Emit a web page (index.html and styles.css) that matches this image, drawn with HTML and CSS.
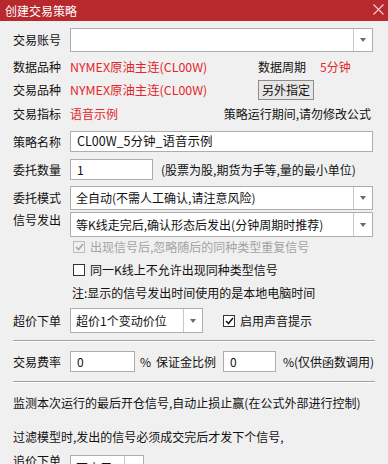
FILE: index.html
```html
<!DOCTYPE html>
<html lang="zh-CN">
<head>
    <meta charset="UTF-8">
    <meta name="viewport" content="width=device-width, initial-scale=1.0">
    <title>创建交易策略</title>
    <link rel="stylesheet" href="styles.css">
</head>

<body>
    <div class="window">
        <div class="titlebar">
            <span class="title">创建交易策略</span>
            <svg class="close" width="11" height="11" viewBox="0 0 11 11">
                <path d="M0.5 0.5 L10.5 10.5 M10.5 0.5 L0.5 10.5" stroke="#f3d0d1" stroke-width="1.1" fill="none"/>
            </svg>
        </div>

        <div class="content">
            <div class="row r1">
                <span class="label">交易账号</span>
                <div class="combo combo-full">
                    <span class="combo-text"></span>
                    <span class="combo-btn"><i class="arrow"></i></span>
                </div>
            </div>

            <div class="row r2">
                <span class="label">数据品种</span>
                <span class="value red">NYMEX原油主连(CL00W)</span>
                <span class="sub-label">数据周期</span>
                <span class="red">5分钟</span>
            </div>

            <div class="row r3">
                <span class="label">交易品种</span>
                <span class="value red">NYMEX原油主连(CL00W)</span>
                <button class="btn">另外指定</button>
            </div>

            <div class="row r4">
                <span class="label">交易指标</span>
                <span class="red">语音示例</span>
                <span class="note-right">策略运行期间,请勿修改公式</span>
            </div>

            <div class="row r5">
                <span class="label">策略名称</span>
                <div class="input input-full">CL00W_5分钟_语音示例</div>
            </div>

            <div class="row r6">
                <span class="label">委托数量</span>
                <div class="input input-qty">1</div>
                <span class="hint">(股票为股,期货为手等,量的最小单位)</span>
            </div>

            <div class="row r7">
                <span class="label">委托模式</span>
                <div class="combo combo-full">
                    <span class="combo-text">全自动(不需人工确认,请注意风险)</span>
                    <span class="combo-btn"><i class="arrow"></i></span>
                </div>
            </div>

            <div class="row r8">
                <span class="label label-up">信号发出</span>
                <div class="combo combo-full">
                    <span class="combo-text">等K线走完后,确认形态后发出(分钟周期时推荐)</span>
                    <span class="combo-btn"><i class="arrow"></i></span>
                </div>
            </div>

            <div class="row r9 indent">
                <span class="check check-on disabled">
                    <svg width="9" height="8" viewBox="0 0 9 8"><path d="M1 4 L3.5 6.5 L8 1" stroke="#a8a8a8" stroke-width="1.6" fill="none"/></svg>
                </span>
                <span class="check-text muted">出现信号后,忽略随后的同种类型重复信号</span>
            </div>

            <div class="row r10 indent">
                <span class="check"></span>
                <span class="check-text">同一K线上不允许出现同种类型信号</span>
            </div>

            <div class="row r11 indent-note">
                <span>注:显示的信号发出时间使用的是本地电脑时间</span>
            </div>

            <div class="row r12">
                <span class="label">超价下单</span>
                <div class="combo combo-price">
                    <span class="combo-text">超价1个变动价位</span>
                    <span class="combo-btn"><i class="arrow"></i></span>
                </div>
                <span class="check check-on sound">
                    <svg width="9" height="8" viewBox="0 0 9 8"><path d="M1 4 L3.5 6.5 L8 1" stroke="#1a1a1a" stroke-width="1.6" fill="none"/></svg>
                </span>
                <span class="check-text">启用声音提示</span>
            </div>

            <div class="sep sep1"></div>

            <div class="row r13">
                <span class="label">交易费率</span>
                <div class="input input-fee">0</div>
                <span class="pct">%</span>
                <span class="margin-label">保证金比例</span>
                <div class="input input-margin">0</div>
                <span class="pct-note">%(仅供函数调用)</span>
            </div>

            <div class="sep sep2"></div>

            <div class="row text1">监测本次运行的最后开仓信号,自动止损止赢(在公式外部进行控制)</div>
            <div class="row text2">过滤模型时,发出的信号必须成交完后才发下个信号,</div>

            <div class="row r14">
                <span class="label">追价下单</span>
                <div class="combo combo-chase">
                    <span class="combo-text">不启用</span>
                    <span class="combo-btn"><i class="arrow"></i></span>
                </div>
            </div>
        </div>
    </div>
</body>
</html>
```

FILE: styles.css
```css
html, body {
    margin: 0;
    padding: 0;
    height: 100%;
    overflow: hidden;
}

body {
    font-family: "Noto Sans CJK SC", "Noto Sans", sans-serif;
    font-size: 12px;
    color: #111;
    background: #f0f0f0;
}

.window {
    width: 388px;
    height: 464px;
    background: #f0f0f0;
    overflow: hidden;
}

.titlebar {
    height: 21px;
    background: #b8292e;
    display: flex;
    align-items: center;
    justify-content: space-between;
    padding: 0 4px 0 5px;
}

.title {
    color: #fff;
    font-size: 12px;
    line-height: 1;
}

.close {
    margin-top: -2px;
}

.content {
    padding: 0 15px 0 13px;
}

.row {
    display: flex;
    align-items: center;
    line-height: 1;
    white-space: nowrap;
}

.label {
    width: 57px;
    flex: none;
}

.label-up {
    align-self: flex-start;
    padding-top: 2px;
}

.red {
    color: #e3262b;
}

.value {
    width: 188px;
    flex: none;
    font-size: 12.4px;
}

.sub-label {
    width: 62px;
    flex: none;
}

.note-right {
    margin-left: auto;
    margin-right: 2px;
}

/* row placement */
.r1 { margin-top: 7px; height: 24px; }
.r2 { margin-top: 5px; height: 20px; }
.r3 { margin-top: 3px; height: 20px; }
.r4 { margin-top: 4px; height: 20px; }
.r5 { margin-top: 7px; height: 21px; }
.r6 { margin-top: 7px; height: 21px; }
.r7 { margin-top: 6px; height: 24px; }
.r8 { margin-top: 2px; height: 25px; }
.r9 { margin-top: 1px; height: 18px; }
.r10 { margin-top: 5px; height: 18px; }
.r11 { margin-top: 5px; height: 18px; }
.r12 { margin-top: 6px; height: 25px; }
.r13 { margin-top: 9px; height: 21px; }
.text1 { margin-top: 10px; height: 20px; }
.text2 { margin-top: 14px; height: 20px; }
.r14 { margin-top: 8px; height: 24px; align-items: flex-start; }

.indent {
    padding-left: 60px;
}

.indent-note {
    padding-left: 59px;
}

/* inputs */
.input {
    box-sizing: border-box;
    height: 100%;
    background: #fff;
    border: 1px solid #adadad;
    padding: 0 6px;
    display: flex;
    align-items: center;
}

.input-full {
    flex: 1;
    font-size: 12.5px;
}

.input-qty {
    width: 83px;
    flex: none;
}

.hint {
    margin-left: 8px;
}

.input-fee {
    width: 65px;
    flex: none;
}

.pct {
    margin-left: 5px;
    width: 7px;
    flex: none;
}

.margin-label {
    margin-left: 9px;
    width: 67px;
    flex: none;
}

.input-margin {
    width: 53px;
    flex: none;
}

.pct-note {
    margin-left: 7px;
}

/* combo boxes */
.combo {
    box-sizing: border-box;
    height: 100%;
    background: #fff;
    border: 1px solid #adadad;
    display: flex;
    align-items: stretch;
}

.combo-full {
    flex: 1;
}

.combo-price {
    width: 133px;
    flex: none;
}

.combo-chase {
    width: 74px;
    flex: none;
    height: 26px;
}

.combo-text {
    flex: 1;
    display: flex;
    align-items: center;
    padding-left: 5px;
    overflow: hidden;
}

.combo-btn {
    width: 18px;
    flex: none;
    border-left: 1px solid #c8c8c8;
    display: flex;
    align-items: center;
    justify-content: center;
}

.arrow {
    width: 0;
    height: 0;
    border-left: 3.5px solid transparent;
    border-right: 3.5px solid transparent;
    border-top: 4px solid #6a6a6a;
}

/* button */
.btn {
    box-sizing: border-box;
    width: 56px;
    height: 20px;
    margin: 0;
    padding: 0;
    font-family: inherit;
    font-size: 12px;
    color: #111;
    background: #e6e6e6;
    border: 1px solid #8c8c8c;
    border-radius: 0;
    line-height: 1;
}

/* checkboxes */
.check {
    box-sizing: border-box;
    width: 12px;
    height: 12px;
    flex: none;
    background: #fff;
    border: 1px solid #333;
    display: flex;
    align-items: center;
    justify-content: center;
}

.check.disabled {
    background: #f0f0f0;
    border-color: #bcbcbc;
}

.check-text {
    margin-left: 5px;
}

.muted {
    color: #a3a3a3;
}

.sound {
    margin-left: 20px;
}

/* separators */
.sep {
    height: 0;
    border-top: 1px solid #a0a0a0;
    border-bottom: 1px solid #fff;
    margin-right: -2px;
}

.sep1 { margin-top: 7px; }
.sep2 { margin-top: 9px; }
```
